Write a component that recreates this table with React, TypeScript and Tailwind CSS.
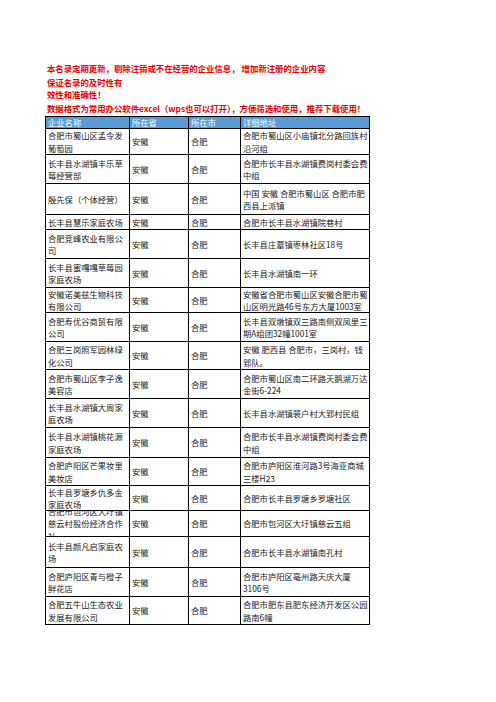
import React from "react";

type Row = { h: number; name: string[]; addr: string[] };

const rows: Row[] = [
  { h: 26, name: ["合肥市蜀山区孟令发", "葡萄园"], addr: ["合肥市蜀山区小庙镇北分路回族村", "沿河组"] },
  { h: 29, name: ["长丰县水湖镇丰乐草", "莓经营部"], addr: ["合肥市长丰县水湖镇费岗村委会费", "中组"] },
  { h: 31, name: ["殷先保（个体经营）"], addr: ["中国 安徽 合肥市蜀山区 合肥市肥", "西县上派镇"] },
  { h: 15, name: ["长丰县慧乐家庭农场"], addr: ["合肥市长丰县水湖镇院巷村"] },
  { h: 29, name: ["合肥竞峰农业有限公", "司"], addr: ["长丰县庄墓镇枣林社区18号"] },
  { h: 29, name: ["长丰县蜜嘎嘎草莓园", "家庭农场"], addr: ["长丰县水湖镇南一环"] },
  { h: 25, name: ["安徽诺美兹生物科技", "有限公司"], addr: ["安徽省合肥市蜀山区安徽合肥市蜀", "山区明光路46号东方大厦1003室"] },
  { h: 29, name: ["合肥寿优谷商贸有限", "公司"], addr: ["长丰县双墩镇双三路南侧双凤里三", "期A组团32幢1001室"] },
  { h: 28, name: ["合肥三岗照军园林绿", "化公司"], addr: ["安徽 肥西县 合肥市，三岗村，钱", "郢队。"] },
  { h: 29, name: ["合肥市蜀山区李子逸", "美容店"], addr: ["合肥市蜀山区南二环路天鹅湖万达", "金街6-224"] },
  { h: 29, name: ["长丰县水湖镇大周家", "庭农场"], addr: ["长丰县水湖镇裴户村大郢村民组"] },
  { h: 30, name: ["长丰县水湖镇桃花源", "家庭农场"], addr: ["合肥市长丰县水湖镇费岗村委会费", "中组"] },
  { h: 28, name: ["合肥庐阳区芒果妆里", "美妆店"], addr: ["合肥市庐阳区淮河路3号海亚商城", "三楼H23"] },
  { h: 25, name: ["长丰县罗塘乡仇多金", "家庭农场"], addr: ["合肥市长丰县罗塘乡罗塘社区"] },
  { h: 26, name: ["合肥市包河区大圩镇", "慈云村股份经济合作", "社"], addr: ["合肥市包河区大圩镇慈云五组"] },
  { h: 31, name: ["长丰县颜凡启家庭农", "场"], addr: ["合肥市长丰县水湖镇南孔村"] },
  { h: 29, name: ["合肥庐阳区青与橙子", "鲜花店"], addr: ["合肥市庐阳区亳州路天庆大厦", "3106号"] },
  { h: 28, name: ["合肥五牛山生态农业", "发展有限公司"], addr: ["合肥市肥东县肥东经济开发区公园", "路南6幢"] },
];

function Cell({ lines, w, h, header }: { lines: string[]; w: string; h: number; header?: boolean }) {
  return (
    <div
      className={`${w} flex items-center overflow-hidden border-r border-b border-black pl-[2px] ${header ? "bg-[#5b9bd5] text-white" : "text-[#222]"}`}
      style={{ height: h }}
    >
      <div className="leading-[12.5px] whitespace-nowrap">
        {lines.map((l, i) => (
          <div key={i}>{l}</div>
        ))}
      </div>
    </div>
  );
}

export default function App() {
  return (
    <div
      className="w-[496px] h-[702px] bg-white pt-[62px] pl-[45px]"
      style={{ fontFamily: '"Noto Sans CJK SC", "Noto Sans", sans-serif' }}
    >
      <div className="text-[8.4px] font-bold text-[#f00000] leading-[12px] pl-[2px]">
        <div className="whitespace-nowrap">本名录定期更新，剔除注销或不在经营的企业信息， 增加新注册的企业内容</div>
        <div className="mt-[2px]">保证名录的及时性有</div>
        <div>效性和准确性！</div>
        <div className="mt-[2px] whitespace-nowrap">数据格式为常用办公软件excel（wps也可以打开），方便筛选和使用，推荐下载使用！</div>
      </div>
      <div className="mt-[2px] w-[325px] border-l border-t border-black text-[8.3px]">
        <div className="flex">
          <Cell lines={["企业名称"]} w="w-[84px]" h={12} header />
          <Cell lines={["所在省"]} w="w-[59px]" h={12} header />
          <Cell lines={["所在市"]} w="w-[52px]" h={12} header />
          <Cell lines={["详细地址"]} w="w-[129px]" h={12} header />
        </div>
        {rows.map((r, i) => (
          <div className="flex" key={i}>
            <Cell lines={r.name} w="w-[84px]" h={r.h} />
            <Cell lines={["安徽"]} w="w-[59px]" h={r.h} />
            <Cell lines={["合肥"]} w="w-[52px]" h={r.h} />
            <Cell lines={r.addr} w="w-[129px]" h={r.h} />
          </div>
        ))}
      </div>
    </div>
  );
}
